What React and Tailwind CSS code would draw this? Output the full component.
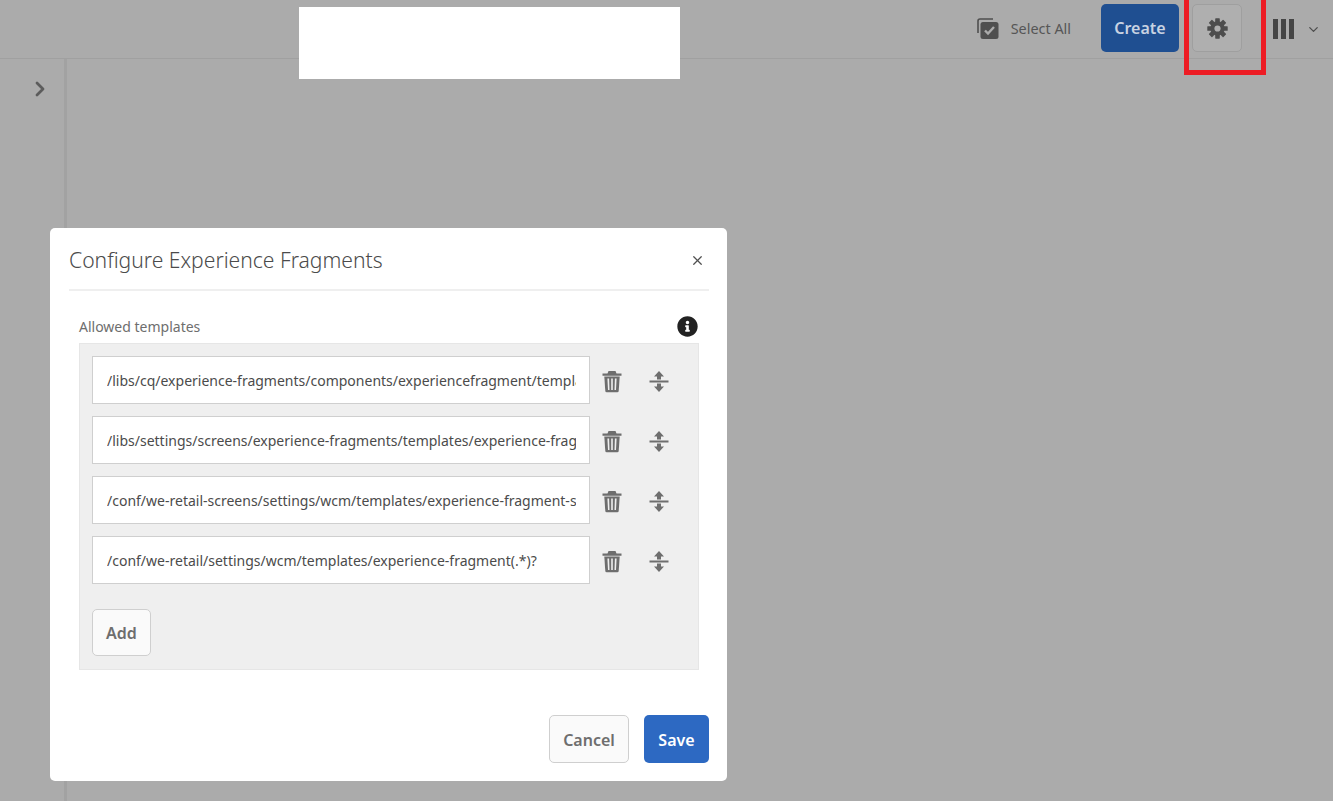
import { ChevronDown, ChevronRight, X } from 'lucide-react';
import { FaInfoCircle } from 'react-icons/fa';

const templates = [
  '/libs/cq/experience-fragments/components/experiencefragment/template',
  '/libs/settings/screens/experience-fragments/templates/experience-fragment-template',
  '/conf/we-retail-screens/settings/wcm/templates/experience-fragment-screens',
  '/conf/we-retail/settings/wcm/templates/experience-fragment(.*)?',
];

function GearIcon() {
  return (
    <svg width="21" height="21" viewBox="0 0 21 21" fill="#4d4d4d">
      {[0, 45, 90, 135, 180, 225, 270, 315].map((deg) => (
        <rect key={deg} x="8.2" y="0.3" width="4.6" height="5" rx="0.6" transform={`rotate(${deg} 10.5 10.5)`} />
      ))}
      <circle cx="10.5" cy="10.5" r="7.2" />
      <circle cx="10.5" cy="10.5" r="3.1" fill="#afafaf" />
    </svg>
  );
}

function TrashIcon() {
  return (
    <svg width="20" height="23" viewBox="0 0 20 22" fill="#6e6e6e">
      <path d="M6.5 0.5h7l1 2.5h5v2.200H.5V3h5z" />
      <path d="M2.300 6h15.400l-1 14.500q-.1 1.300-1.400 1.300H4.700q-1.300 0-1.400-1.300z" />
      <path d="M5.400 8h1.700l.4 11.500H6zM9.200 8h1.600v11.500H9.200zM12.900 8h1.700L14 19.500h-1.500z" fill="#efefef" />
    </svg>
  );
}

function MoveIcon() {
  return (
    <svg width="20" height="23" viewBox="0 0 20 22" fill="#6e6e6e">
      <path d="M10 0.5l5 5.500h-3v3H8V6H5z" />
      <rect x="0.5" y="10" width="19" height="2" />
      <path d="M8 13h4v3h3l-5 5.500L5 16h3z" />
    </svg>
  );
}

function SelectAllIcon() {
  return (
    <svg width="22" height="22" viewBox="0 0 22 22">
      <path d="M1 15V3q0-2 2-2h13" fill="none" stroke="#4f4f4f" strokeWidth="1.6" />
      <rect x="3.5" y="4" width="18" height="17" rx="2.5" fill="#4f4f4f" />
      <path d="M8 12.500l3 3 6-6.500" fill="none" stroke="#ababab" strokeWidth="2.4" />
    </svg>
  );
}

function TemplateRow({ value }) {
  return (
    <div className="flex items-center h-12">
      <div className="w-[498px] h-12 bg-white border border-[#cfcfcf] pl-[14px] pr-[13px] flex items-center overflow-hidden">
        <span className="text-[14px] text-[#4b4b4b] whitespace-nowrap overflow-hidden">{value}</span>
      </div>
      <div className="ml-3 w-5 flex justify-center mt-[2px]"><TrashIcon /></div>
      <div className="ml-[27px] w-5 flex justify-center mt-[2px]"><MoveIcon /></div>
    </div>
  );
}

export default function App() {
  return (
    <div className="relative w-[1333px] h-[801px] overflow-hidden bg-[#ababab] font-['Noto_Sans',sans-serif]">
      <header className="h-[59px] border-b border-[#a0a0a0] flex items-start justify-end">
        <div className="flex items-center mt-[18px] h-[22px]">
          <SelectAllIcon />
          <span className="ml-[12px] text-[14.4px] text-[#565656]">Select All</span>
        </div>
        <button className="ml-[30px] mt-1 w-[78px] h-[48px] rounded-[5px] bg-[#1f4f91] text-[#c8d3e2] text-[16px] font-semibold">Create</button>
        <button className="ml-[13px] mt-1 w-[50px] h-[48px] rounded-[5px] border border-[#9f9f9f] bg-[#afafaf] flex items-center justify-center">
          <GearIcon />
        </button>
        <div className="ml-[31px] mt-[19px] flex items-center mr-[12px]">
          <div className="flex gap-[3px]">
            <span className="w-[5px] h-[20px] bg-[#454545]" />
            <span className="w-[5px] h-[20px] bg-[#454545]" />
            <span className="w-[5px] h-[20px] bg-[#454545]" />
          </div>
          <ChevronDown size={15} strokeWidth={2} color="#4d4d4d" className="ml-[12px]" />
        </div>
      </header>
      <div className="h-[742px] w-[67px] border-r-[3px] border-[#a2a2a2] flex justify-center">
        <ChevronRight size={24} strokeWidth={2.8} color="#5c5c5c" className="mt-[18px] ml-[16px]" />
      </div>

      {/* blanked out area and the red annotation */}
      <div className="absolute left-[299px] top-[7px] w-[381px] h-[72px] bg-white" />
      <div className="absolute left-[1184px] top-0 w-[82px] h-[75px] border-[5px] border-t-0 border-[#ed1c24]" />

      <div className="absolute left-[50px] top-[228px] w-[677px] h-[553px] bg-white rounded-[5px] pl-[19px] pr-[18px] flex flex-col">
        <div className="h-[63px] border-b-[2px] border-[#efefef] flex items-center justify-between">
          <h2 className="text-[21.1px] font-light text-[#4b4b4b] mt-[3px]">Configure Experience Fragments</h2>
          <X size={15} strokeWidth={2} color="#505050" className="mr-[4px] mt-[3px]" />
        </div>
        <div className="mx-[10px] mt-[25px] flex items-center justify-between h-[22px]">
          <span className="text-[14px] text-[#6e6e6e] -mt-[2px]">Allowed templates</span>
          <FaInfoCircle size={21} color="#222222" className="-mt-[2px] mr-[1px]" />
        </div>
        <div className="mx-[10px] mt-[5px] h-[327px] bg-[#efefef] border border-[#e6e6e6] pt-3 pl-3">
          <div className="flex flex-col gap-3">
            {templates.map((t) => (
              <TemplateRow key={t} value={t} />
            ))}
          </div>
          <button className="mt-[25px] w-[59px] h-[47px] rounded-[5px] border border-[#cfcfcf] bg-[#fafafa] text-[#6e6e6e] text-[16px] font-semibold">Add</button>
        </div>
        <div className="mt-[45px] flex justify-end gap-[15px]">
          <button className="w-[80px] h-12 rounded-[5px] border border-[#cfcfcf] bg-[#fafafa] text-[#6e6e6e] text-[16px] font-semibold pt-[2px]">Cancel</button>
          <button className="w-[65px] h-12 rounded-[5px] bg-[#2d69c2] text-white text-[16px] font-semibold pt-[2px]">Save</button>
        </div>
      </div>
    </div>
  );
}
